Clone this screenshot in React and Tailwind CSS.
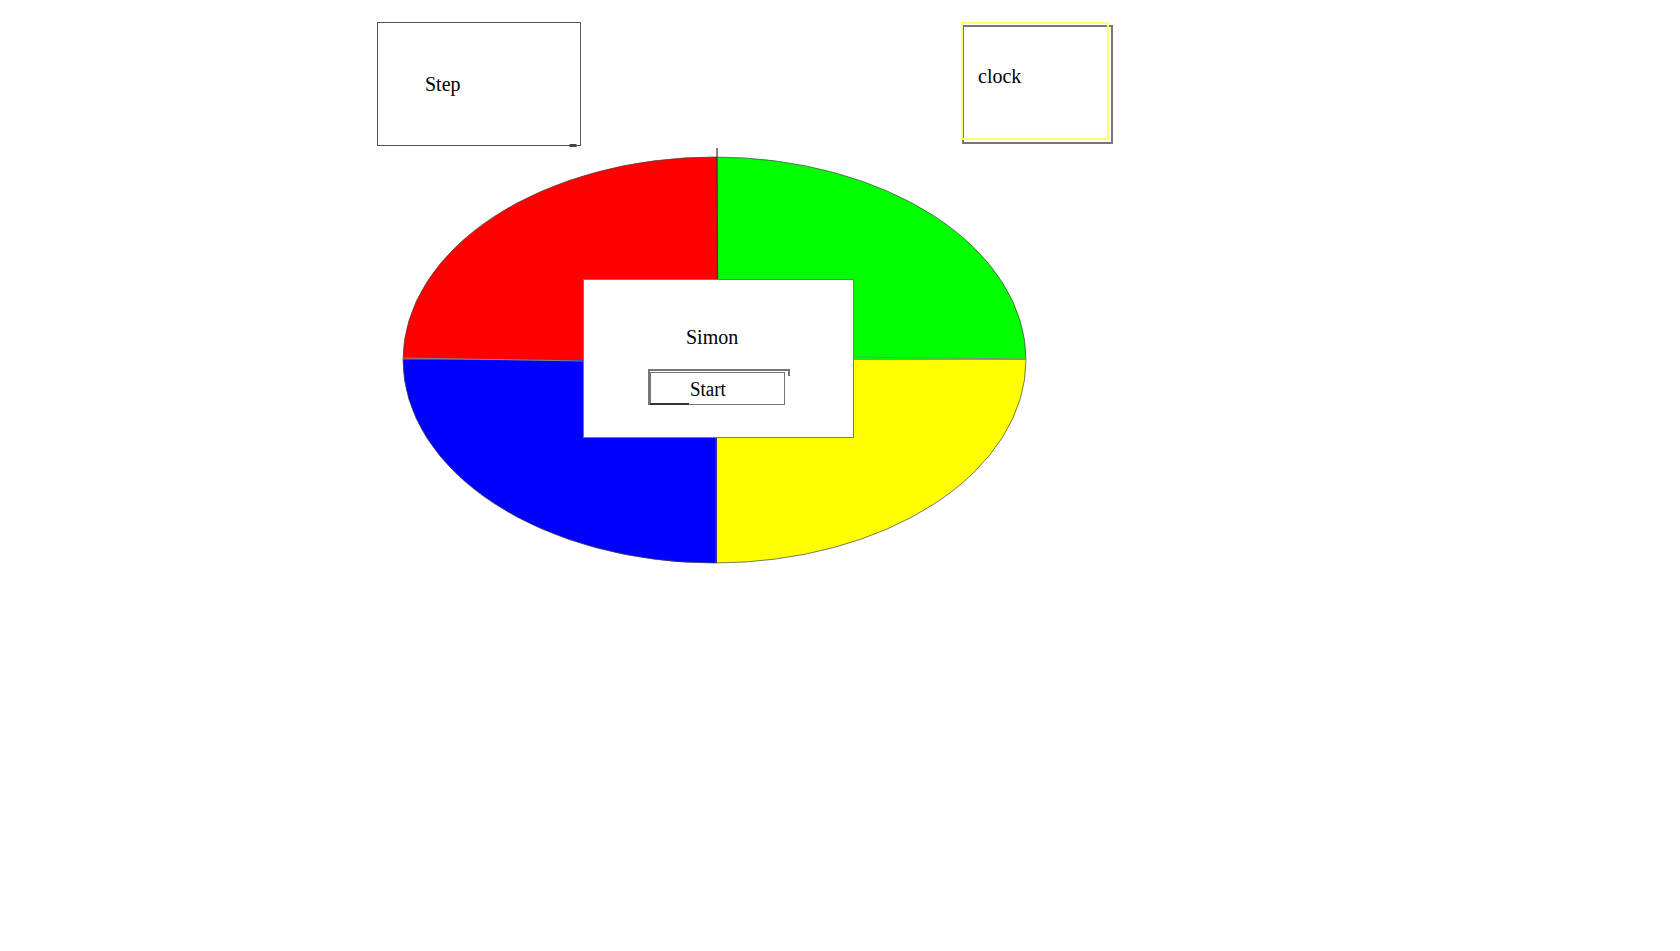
export default function App() {
  const serif = { fontFamily: '"Liberation Serif", "Times New Roman", serif' };

  return (
    <div className="min-h-[951px] w-[1680px] bg-white text-black" style={serif}>
      <div className="flex items-start pt-[22px] pl-[377px]">
        {/* step counter */}
        <div className="relative h-[124px] w-[204px] border border-[#555] pl-[47px] pt-[49px] text-[20px] leading-[24px]">
          Step
          <span className="absolute bottom-[-2px] right-[3px] h-[3px] w-[8px] rounded-sm bg-[#444]" />
        </div>

        {/* clock */}
        <div className="relative ml-[380px]">
          <div className="ml-[1px] mt-[3px] h-[119px] w-[151px] border-2 border-[#777] pl-[14px] pt-[37px] text-[20px] leading-[24px]">
            clock
          </div>
          <div className="absolute left-0 top-0 h-[118px] w-[148px] border-2 border-[#ffff70]" />
        </div>
      </div>

      {/* board */}
      <div className="relative -mt-[1px] ml-[400px] h-[425px] w-[632px]">
        <svg width="632" height="425" viewBox="0 0 632 425" className="block">
          <path d="M317 215 L3 215 A311.5 203 0 0 1 317 12 Z" fill="#ff0000" />
          <path d="M317 215 L317 12 A311.5 203 0 0 1 626 215 Z" fill="#00ff00" />
          <path d="M317 215 L626 215 A311.5 203 0 0 1 317 418 Z" fill="#ffff00" />
          <path d="M317 215 L317 418 A311.5 203 0 0 1 3 215 Z" fill="#0000ff" />
          <ellipse cx="314.5" cy="215" rx="311.5" ry="203" fill="none" stroke="#444" strokeWidth="0.7" />
          <path d="M3 213 L183 216" stroke="#888" strokeWidth="1" />
          <path d="M454 212 L626 214" stroke="#888" strokeWidth="1" />
          <path d="M317 3 L317.5 140" stroke="#333" strokeWidth="1.2" />
          <path d="M316 292 L316 418" stroke="#555" strokeWidth="1" />
        </svg>

        <div className="absolute left-[183px] top-[134px] h-[159px] w-[271px] border border-[#777] bg-white">
          <div className="pl-[102px] pt-[45px] text-[20px] leading-[24px]">Simon</div>
          <div className="relative ml-[66px] mt-[23px] h-[33px] w-[135px]">
            <div className="absolute left-[-2px] top-[-3px] h-[36px] w-[140px] border-l-2 border-t-2 border-[#777]" />
            <div className="absolute right-[-5px] top-[-3px] h-[7px] w-[2px] bg-[#777]" />
            <button className="relative h-[33px] w-[135px] border border-[#777] bg-white pl-[39px] text-left text-[20px] leading-[24px]">
              <span className="inline-block origin-left scale-x-[0.95]">Start</span>
            </button>
            <div className="absolute bottom-0 left-0 h-[2px] w-[39px] bg-[#333]" />
          </div>
        </div>
      </div>
    </div>
  );
}
